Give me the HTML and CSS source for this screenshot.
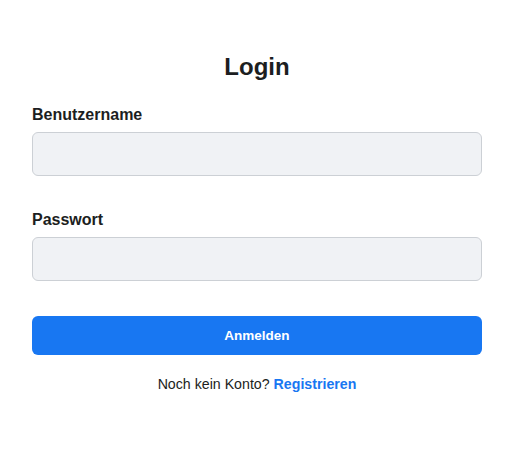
FILE: index.html
```html
<!DOCTYPE html>
<html lang="de">
<head>
<meta charset="utf-8">
<title>Login</title>
<link rel="stylesheet" href="styles.css">
</head>
<body>
<main class="login">
  <h1 class="title">Login</h1>
  <form class="form">
    <div class="group">
      <label class="label" for="user">Benutzername</label>
      <input class="input" id="user" type="text">
    </div>
    <div class="group">
      <label class="label" for="pass">Passwort</label>
      <input class="input" id="pass" type="password">
    </div>
    <button class="button" type="button">Anmelden</button>
  </form>
  <p class="footer">Noch kein Konto? <a class="link" href="#">Registrieren</a></p>
</main>
</body>
</html>
```
FILE: styles.css
```css
html, body {
  margin: 0;
  padding: 0;
  background: #ffffff;
}
body {
  font-family: "Liberation Sans", Arial, sans-serif;
  color: #1c1e21;
}
.login {
  box-sizing: border-box;
  width: 100%;
  padding: 53px 33px 0 32px;
}
.title {
  margin: 0 0 24px 0;
  font-size: 24px;
  line-height: 28px;
  font-weight: bold;
  text-align: center;
}
.form {
  display: flex;
  flex-direction: column;
  margin: 0;
}
.group {
  display: flex;
  flex-direction: column;
  margin-bottom: 34px;
}
.group + .group {
  margin-bottom: 35px;
}
.label {
  font-size: 16px;
  line-height: 19px;
  font-weight: bold;
  margin-bottom: 8px;
}
.input {
  box-sizing: border-box;
  width: 100%;
  height: 44px;
  border: 1px solid #ccd0d5;
  border-radius: 6px;
  background: #f0f2f5;
  margin: 0;
  padding: 0 12px;
  font-family: inherit;
  font-size: 16px;
}
.button {
  box-sizing: border-box;
  width: 100%;
  height: 39px;
  border: none;
  border-radius: 6px;
  background: #1877f2;
  color: #ffffff;
  font-family: inherit;
  font-size: 13.5px;
  font-weight: bold;
  margin: 0;
  padding: 0;
}
.footer {
  margin: 21px 0 0 0;
  text-align: center;
  font-size: 14.2px;
  line-height: 16px;
}
.link {
  color: #1877f2;
  font-weight: bold;
  text-decoration: none;
}
```
